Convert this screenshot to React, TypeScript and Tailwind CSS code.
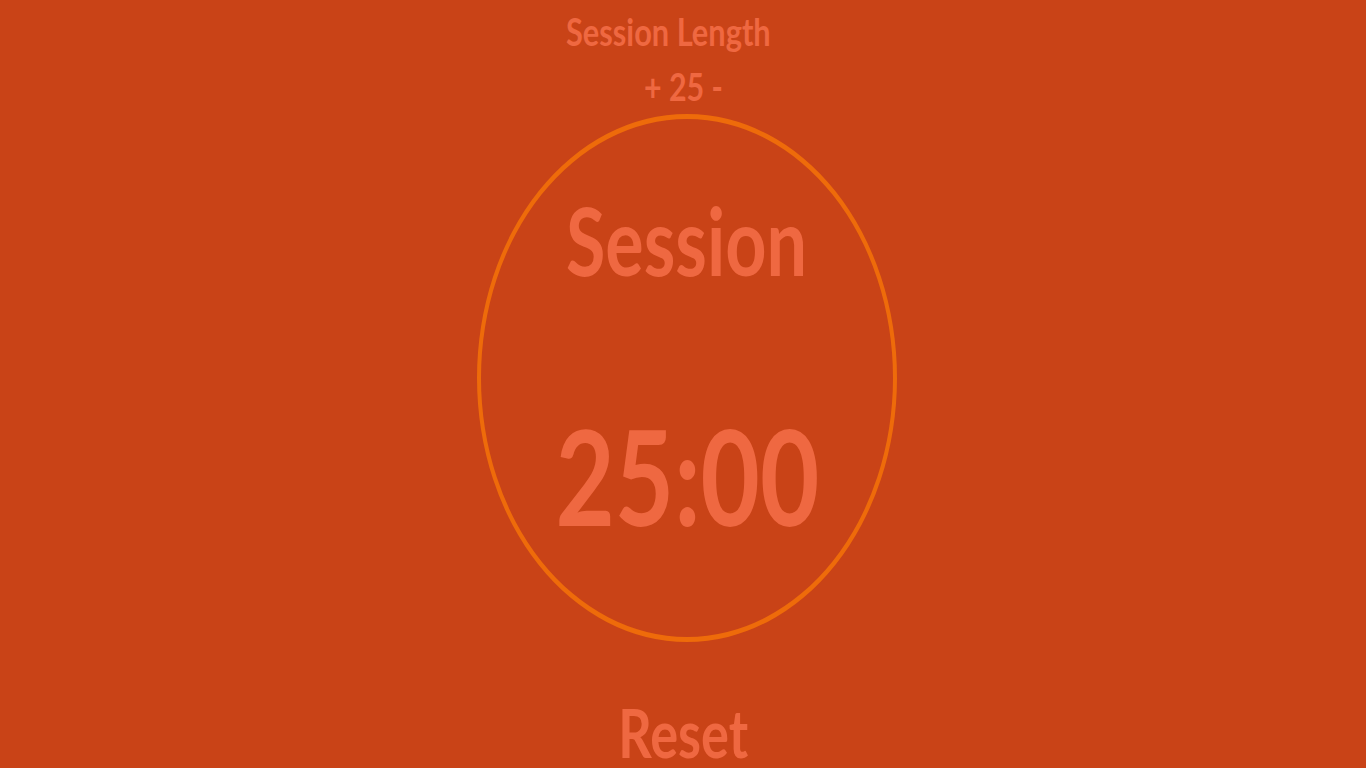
import React from "react";

export default function App() {
  const base = "inline-block font-bold text-[#ef6841] whitespace-nowrap";
  return (
    <div
      className="w-full h-[768px] overflow-hidden bg-[#c94317] flex flex-col items-center"
      style={{ fontFamily: "Lato, 'Noto Sans', sans-serif" }}
    >
      <div className="shrink-0 h-[63px] leading-[63px] text-[38px] mr-[30px]">
        <span className={`${base} scale-x-[0.81]`}>Session Length</span>
      </div>
      <div className="shrink-0 h-[47px] leading-[47px] text-[38px]">
        <span className={`${base} scale-x-[0.8]`}>+ 25 -</span>
      </div>
      <div className="shrink-0 mt-[4px] ml-[8px] w-[420px] h-[528px] rounded-[50%] border-y-[5px] border-x-[4px] border-[#ee6b0a] flex flex-col items-center pt-[71px]">
        <div className="shrink-0 h-[100px] leading-[100px] text-[94px]">
          <span className={`${base} scale-x-[0.765]`}>Session</span>
        </div>
        <div className="shrink-0 mt-[115px] h-[140px] leading-[140px] text-[133px]">
          <span className={`${base} scale-x-[0.77]`}>25:00</span>
        </div>
      </div>
      <div className="shrink-0 mt-[60px] h-[60px] leading-[60px] text-[67px]">
        <span className={`${base} scale-x-[0.78]`}>Reset</span>
      </div>
    </div>
  );
}
